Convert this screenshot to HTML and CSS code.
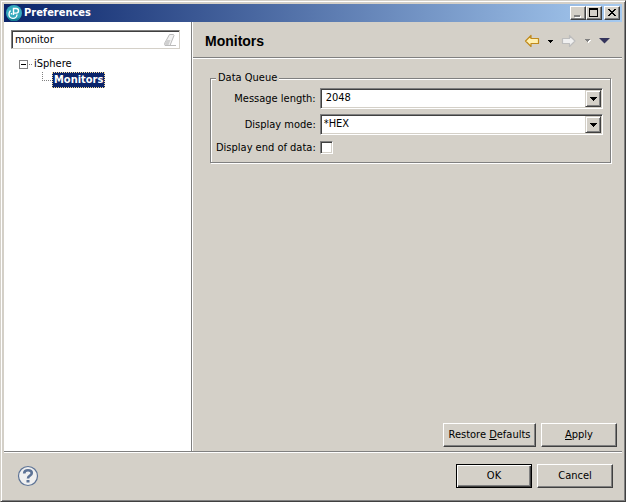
FILE: index.html
```
<!DOCTYPE html>
<html lang="en">
<head>
<meta charset="utf-8">
<title>Preferences</title>
<link rel="stylesheet" href="styles.css">
</head>
<body>
<div class="window">
  <header class="titlebar">
    <svg class="app-icon" width="16" height="16" viewBox="0 0 16 16" aria-hidden="true">
      <circle cx="8" cy="8" r="8" fill="#35aabd"/>
      <path d="M1 12A8 8 0 0 0 15 12Q8 16 1 12Z" fill="#147f93"/>
      <path d="M4.500 5.500Q3 7 3 9.200A4 4 0 0 0 11 9.500M7.500 10V3.500h2.700a2.300 2.300 0 0 1 0 4.600H7.500M5.500 8v1.500" fill="none" stroke="#fff" stroke-width="1.400"/>
    </svg>
    <span class="title">Preferences</span>
    <div class="window-buttons">
      <button class="win-btn" type="button" aria-label="Minimize"><svg width="12" height="10" shape-rendering="crispEdges"><path d="M3 8h6v2H3z" fill="#fff"/><path d="M2 7h6v2H2z" fill="#808080"/></svg></button>
      <button class="win-btn" type="button" aria-label="Maximize"><svg width="12" height="10" shape-rendering="crispEdges"><path d="M1 0h9v9H1zM2 2v6h7V2z" fill="#000" fill-rule="evenodd"/></svg></button>
      <button class="win-btn close" type="button" aria-label="Close"><svg width="12" height="10" shape-rendering="crispEdges"><path d="M2 1h2v1h1v1h2V2h1V1h2v1H9v1H8v1H7v1h1v1h1v1h1v1H8V7H7V6H5v1H4v1H2V7h1V6h1V5h1V4H4V3H3V2H2z"/></svg></button>
    </div>
  </header>
  <main class="body">
    <nav class="sidebar">
      <div class="search">
        <input class="search-input" type="text" value="monitor" aria-label="Filter">
        <button class="clear" type="button" aria-label="Clear"><svg width="14" height="13" viewBox="0 0 14 13"><path d="M6.500 .5h4l.5 1-4 10H2L1.500 9.500z" fill="#f2f2f2" stroke="#bbb"/><path d="M3.500 6h4L5.500 11H2.500L1.800 9.500z" fill="#d0d0d0"/><path d="M7 11.500h6" stroke="#bbb"/></svg></button>
      </div>
      <ul class="tree">
        <li>
          <div class="node"><button class="toggle" type="button" aria-label="Collapse"></button><span class="dots"></span><span class="label">iSphere</span></div>
          <ul class="subtree">
            <li class="node"><span class="elbow"></span><a class="label selected" href="#monitors">Monitors</a></li>
          </ul>
        </li>
      </ul>
    </nav>
    <section class="page" id="monitors">
      <div class="page-head">
        <h1>Monitors</h1>
        <div class="nav-tools">
          <button class="tool" type="button" aria-label="Back"><svg width="16" height="14" viewBox="0 0 16 14"><path d="M1.500 7l5.500-5.500v3h7.500v5H7v3z" fill="#fff0b0" stroke="#c08a1c" stroke-width="1.200" stroke-linejoin="round"/></svg></button>
          <button class="tool" type="button" aria-label="Back history"><svg width="5" height="3" shape-rendering="crispEdges"><path d="M0 0h5v1H4v1H3v1H2V2H1V1H0z"/></svg></button>
          <button class="tool forward" type="button" aria-label="Forward"><svg width="16" height="14" viewBox="0 0 16 14"><path d="M14 7L8.500 1.500v3H1.500v5h7v3z" fill="#f0f0f0" stroke="#bdbdbd" stroke-width="1.200" stroke-linejoin="round"/></svg></button>
          <button class="tool" type="button" aria-label="Forward history"><svg width="6" height="4" shape-rendering="crispEdges"><path d="M1 1h5v1H5v1H4v1H3V3H2V2H1z" fill="#fff"/><path d="M0 0h5v1H4v1H3v1H2V2H1V1H0z" fill="#808080"/></svg></button>
          <button class="tool menu" type="button" aria-label="Menu"><svg width="11" height="6"><path d="M0 0h11L5.500 5.500z" fill="#34345c"/></svg></button>
        </div>
      </div>
      <form class="page-body">
        <fieldset class="group">
          <legend>Data Queue</legend>
          <label for="len">Message length:</label>
          <div class="combo"><select id="len" class="editable"><option>2048</option></select><span class="drop"><svg width="7" height="4" shape-rendering="crispEdges"><path d="M0 0h7v1H6v1H5v1H4v1H3V3H2V2H1V1H0z"/></svg></span></div>
          <label for="mode">Display mode:</label>
          <div class="combo"><select id="mode"><option>*HEX</option></select><span class="drop"><svg width="7" height="4" shape-rendering="crispEdges"><path d="M0 0h7v1H6v1H5v1H4v1H3V3H2V2H1V1H0z"/></svg></span></div>
          <label for="end">Display end of data:</label>
          <input id="end" class="check" type="checkbox">
        </fieldset>
        <div class="page-actions">
          <button class="btn restore" type="button">Restore <u>D</u>efaults</button>
          <button class="btn" type="button"><u>A</u>pply</button>
        </div>
      </form>
    </section>
  </main>
  <footer class="footer">
    <button class="help" type="button" aria-label="Help"><svg width="22" height="22" viewBox="0 0 22 22"><circle cx="11" cy="11" r="9.500" fill="#f0f0f0" stroke="#5d7396" stroke-width="1.200"/><path d="M7.200 8.500Q7.200 5.200 11 5.200t3.800 2.800q0 1.500-1.900 2.600Q11 11.600 11 13.500" fill="none" stroke="#5d7396" stroke-width="2.600"/><path d="M9.500 15h3v2.500h-3z" fill="#5d7396"/></svg></button>
    <button class="btn default" type="button">OK</button>
    <button class="btn" type="button">Cancel</button>
  </footer>
</div>
</body>
</html>
```
FILE: styles.css
```
* { box-sizing: border-box; }
:root {
  --face: #d4d0c8;
  --shadow: #808080;
  --dark: #404040;
  --navy: #0a246a;
}
body, button, input, select {
  font-family: "DejaVu Sans Condensed", "DejaVu Sans", sans-serif;
  font-size: 11px;
  line-height: 14px;
  color: #000;
}
body { margin: 0; background: var(--face); }
svg { display: block; }
button { padding: 0; border: 0; background: none; }
ul { list-style: none; margin: 0; padding: 0; }

.window {
  display: flex;
  flex-direction: column;
  min-height: 100vh;
  padding: 3px 3px 2px 3px;
  border: 1px solid var(--face);
  border-right-color: var(--dark);
  border-bottom-color: var(--dark);
  box-shadow: inset 1px 1px #fff, inset -1px -1px var(--shadow);
}

.titlebar {
  display: flex;
  align-items: center;
  height: 18px;
  padding: 0 2px;
  background: linear-gradient(to right, #0a246a, #a6caf0);
}
.title { margin-left: 2px; color: #fff; font-weight: bold; }
.window-buttons { display: flex; margin-left: auto; }
.win-btn {
  display: grid;
  place-items: center;
  width: 16px;
  height: 14px;
  background: var(--face);
  border: 1px solid;
  border-color: #fff var(--dark) var(--dark) #fff;
  box-shadow: inset -1px -1px var(--shadow);
}
.close { margin-left: 2px; }

.body { flex: 1; display: flex; }
.sidebar { flex: 0 0 187px; padding: 8px 7px; background: #fff; }
.search {
  display: flex;
  align-items: center;
  height: 19px;
  margin-right: 4px;
  padding: 1px 2px 0 0;
  border: 1px solid;
  border-color: var(--shadow) var(--face) var(--face) var(--shadow);
  box-shadow: inset 1px 1px var(--dark);
}
.search-input {
  flex: 1;
  min-width: 0;
  height: 14px;
  padding: 0 3px;
  border: 0;
  outline: 0;
  background: transparent;
}
.tree { padding: 7px 8px; }
.node { display: flex; align-items: center; height: 16px; }
.toggle {
  width: 9px;
  height: 9px;
  border: 1px solid var(--shadow);
  background: linear-gradient(#000, #000) center / 5px 1px no-repeat;
}
.dots {
  width: 5px;
  height: 1px;
  background: repeating-linear-gradient(to right, transparent 0 1px, var(--shadow) 1px 2px);
}
.label { padding: 0 1px; color: #000; text-decoration: none; }
.subtree { padding-left: 23px; }
.elbow {
  align-self: flex-start;
  width: 10px;
  height: 9px;
  background:
    repeating-linear-gradient(to bottom, var(--shadow) 0 1px, transparent 1px 2px) 0 0 / 1px 9px no-repeat,
    repeating-linear-gradient(to right, var(--shadow) 0 1px, transparent 1px 2px) 0 8px / 10px 1px no-repeat;
}
.selected {
  padding: 0 1px;
  border: 1px dotted #f5db95;
  background: var(--navy);
  color: #fff;
  font-weight: bold;
}

.page {
  flex: 1;
  display: flex;
  flex-direction: column;
  border-left: 1px solid var(--shadow);
  box-shadow: inset 1px 0 #fff;
}
.page-head {
  display: flex;
  align-items: center;
  height: 37px;
  margin-left: 1px;
  padding: 2px 12px 0;
  border-bottom: 1px solid #fff;
  box-shadow: inset 0 -1px var(--shadow);
}
h1 {
  margin: 0;
  font: bold 14px/16px "Liberation Sans", sans-serif;
}
.nav-tools { display: flex; align-items: center; gap: 8px; margin-left: auto; }

.page-body { flex: 1; display: flex; flex-direction: column; padding: 12px 5px 4px 18px; }
.group {
  display: grid;
  grid-template-columns: auto 1fr;
  align-items: center;
  gap: 5px 4px;
  min-width: 0;
  margin: 0 6px 0 0;
  padding: 3px 7px 7px 5px;
  border: 1px solid var(--shadow);
  box-shadow: 1px 1px #fff, inset 1px 1px #fff;
}
.group label { text-align: right; }
legend { padding: 0 2px; background: var(--face); }
.combo {
  position: relative;
  height: 21px;
  border: 1px solid;
  border-color: var(--shadow) #fff #fff var(--shadow);
  background: #fff;
  box-shadow: inset 1px 1px var(--dark), inset -1px -1px var(--face);
}
.combo select {
  display: block;
  appearance: none;
  width: 100%;
  height: 18px;
  padding: 0 20px 0 3px;
  border: 0;
  outline: 0;
  background: transparent;
}
.combo .editable { padding-left: 5px; }
.drop {
  position: absolute;
  top: 1px;
  right: 1px;
  bottom: 1px;
  display: grid;
  place-items: center;
  width: 16px;
  background: var(--face);
  border: 1px solid;
  border-color: var(--face) var(--dark) var(--dark) var(--face);
  box-shadow: inset 1px 1px #fff, inset -1px -1px var(--shadow);
  pointer-events: none;
}
.check {
  appearance: none;
  width: 13px;
  height: 13px;
  margin: 1px 0;
  border: 1px solid;
  border-color: var(--shadow) #fff #fff var(--shadow);
  background: #fff;
  box-shadow: inset 1px 1px var(--dark), inset -1px -1px var(--face);
}
.check:checked { background: #000 content-box; padding: 2px; }

.btn {
  width: 76px;
  height: 24px;
  border: 1px solid;
  border-color: #fff var(--dark) var(--dark) #fff;
  background: var(--face);
  box-shadow: inset -1px -1px var(--shadow);
}
.restore { width: 93px; }
.default {
  border-color: #000;
  box-shadow: inset 1px 1px #fff, inset -1px -1px var(--dark), inset -2px -2px var(--shadow);
}
.page-actions { display: flex; justify-content: flex-end; gap: 5px; margin-top: auto; }
.footer {
  display: flex;
  align-items: center;
  gap: 5px;
  height: 48px;
  padding: 0 9px 0 13px;
  border-top: 1px solid var(--shadow);
  box-shadow: inset 0 1px #fff;
}
.help { margin-right: auto; }
```
